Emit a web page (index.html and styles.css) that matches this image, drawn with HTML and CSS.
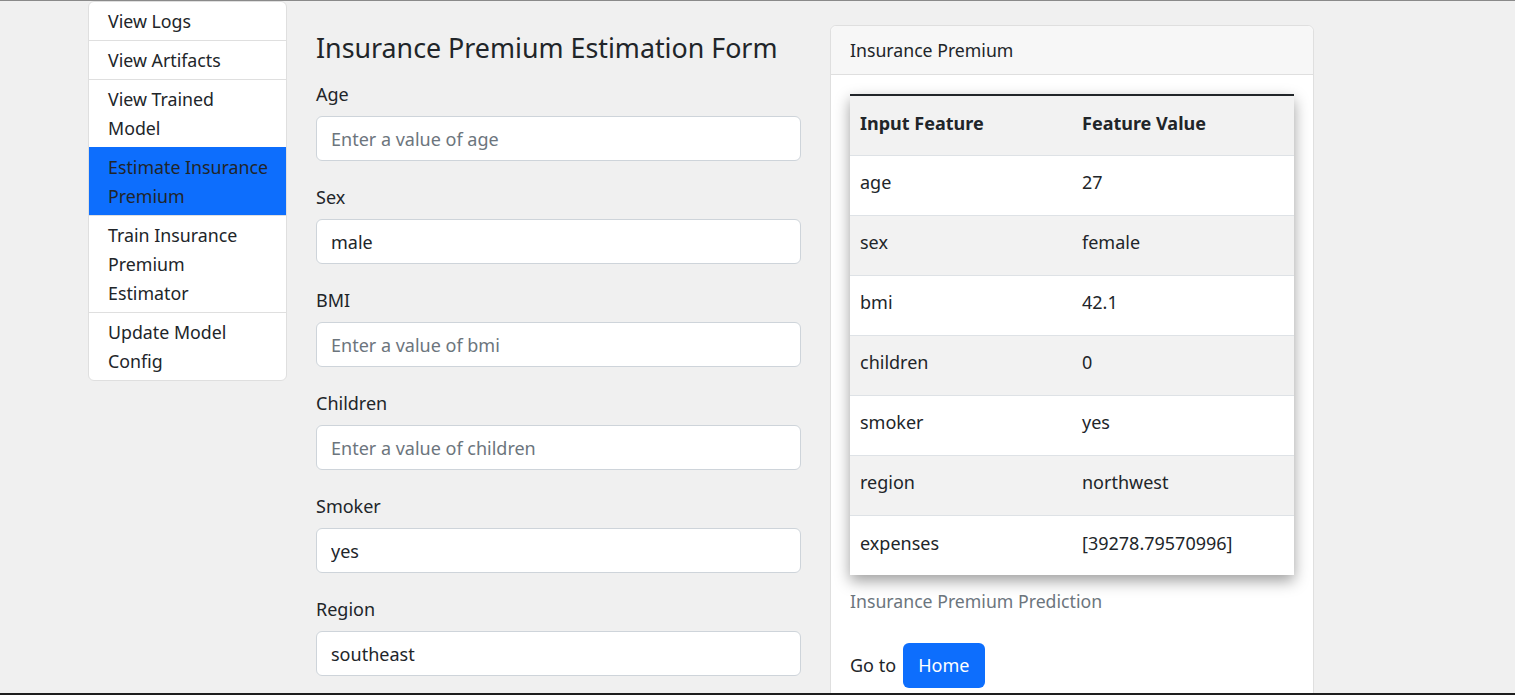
FILE: index.html
```html
<!DOCTYPE html>
<html lang="en">
<head>
<meta charset="utf-8">
<title>Insurance Premium Estimation</title>
<link rel="stylesheet" href="styles.css">
</head>
<body>
<div class="frame">
  <div class="page">
    <nav class="sidebar">
      <a class="item" href="#">View Logs</a>
      <a class="item" href="#">View Artifacts</a>
      <a class="item" href="#">View Trained Model</a>
      <a class="item active" href="#">Estimate Insurance Premium</a>
      <a class="item" href="#">Train Insurance Premium Estimator</a>
      <a class="item" href="#">Update Model Config</a>
    </nav>

    <form class="form">
      <h3 class="title">Insurance Premium Estimation Form</h3>
      <div class="group">
        <label class="label">Age</label>
        <input class="input" type="text" placeholder="Enter a value of age">
      </div>
      <div class="group">
        <label class="label">Sex</label>
        <input class="input" type="text" value="male">
      </div>
      <div class="group">
        <label class="label">BMI</label>
        <input class="input" type="text" placeholder="Enter a value of bmi">
      </div>
      <div class="group">
        <label class="label">Children</label>
        <input class="input" type="text" placeholder="Enter a value of children">
      </div>
      <div class="group">
        <label class="label">Smoker</label>
        <input class="input" type="text" value="yes">
      </div>
      <div class="group">
        <label class="label">Region</label>
        <input class="input" type="text" value="southeast">
      </div>
    </form>

    <section class="card">
      <div class="card-header">Insurance Premium</div>
      <div class="card-body">
        <table class="table">
          <tr><th class="c1">Input Feature</th><th>Feature Value</th></tr>
          <tr><td>age</td><td>27</td></tr>
          <tr><td>sex</td><td>female</td></tr>
          <tr><td>bmi</td><td>42.1</td></tr>
          <tr><td>children</td><td>0</td></tr>
          <tr><td>smoker</td><td>yes</td></tr>
          <tr><td>region</td><td>northwest</td></tr>
          <tr><td>expenses</td><td>[39278.79570996]</td></tr>
        </table>
        <p class="muted">Insurance Premium Prediction</p>
        <p class="goto">Go to <a class="btn" href="#">Home</a></p>
      </div>
    </section>
  </div>
</div>
</body>
</html>
```

FILE: styles.css
```css
html, body {
  margin: 0;
  padding: 0;
  background: #f0f0f0;
}

body {
  font-family: "Noto Sans", "Open Sans", sans-serif;
  color: #212529;
  font-size: 18px;
}

.frame {
  height: 695px;
  box-sizing: border-box;
  border-top: 1px solid #8a8a8a;
  border-bottom: 2px solid #1e1e1e;
  overflow: hidden;
}

.page {
  display: flex;
  align-items: flex-start;
  gap: 29px;
  padding-left: 88px;
}

/* Sidebar list */
.sidebar {
  width: 199px;
  flex: none;
  display: flex;
  flex-direction: column;
  background: #fff;
  border: 1px solid #dfdfdf;
  border-radius: 6px;
  overflow: hidden;
  box-sizing: border-box;
}

.item {
  display: block;
  padding: 4.5px 17px 4.5px 19px;
  line-height: 29px;
  font-size: 17.8px;
  color: #212529;
  text-decoration: none;
  border-top: 1px solid #dfdfdf;
}

.item:first-child {
  border-top: none;
}

.item.active {
  background: #0d6efd;
  border-top-color: #0d6efd;
}

/* Form */
.form {
  width: 485px;
  flex: none;
  padding-top: 30px;
}

.title {
  margin: 0 0 14.6px;
  font-size: 26.8px;
  font-weight: 400;
  line-height: 34.5px;
  color: #212529;
}

.group {
  margin-bottom: 21.6px;
}

.label {
  display: block;
  margin-bottom: 7.6px;
  line-height: 28.8px;
  font-size: 18px;
}

.input {
  display: block;
  width: 100%;
  box-sizing: border-box;
  height: 45px;
  padding: 7px 14px;
  font-family: inherit;
  font-size: 18px;
  line-height: 28.8px;
  color: #212529;
  background: #fff;
  border: 1px solid #ced4da;
  border-radius: 6px;
  outline: none;
}

.input::placeholder {
  color: #6c757d;
}

/* Card */
.card {
  width: 484px;
  flex: none;
  margin-top: 24px;
  background: #fff;
  border: 1px solid #dfdfdf;
  border-radius: 6px;
  box-sizing: border-box;
}

.card-header {
  height: 49px;
  box-sizing: border-box;
  padding: 0 19px;
  display: flex;
  align-items: center;
  font-size: 17.7px;
  background: #f7f7f7;
  border-bottom: 1px solid #dfdfdf;
  border-radius: 6px 6px 0 0;
}

.card-body {
  padding: 19.2px 19px;
}

.table {
  width: 100%;
  border-collapse: collapse;
  border-top: 2px solid #212529;
  box-shadow: 0 6px 14px rgba(0, 0, 0, 0.38);
  font-size: 18px;
}

.table th,
.table td {
  height: 60px;
  box-sizing: border-box;
  padding: 0 10px 5px;
  text-align: left;
  vertical-align: middle;
  line-height: 28.8px;
}

.table th {
  font-weight: 700;
}

.table .c1 {
  width: 222px;
}

.table tr {
  border-top: 1px solid #dee2e6;
}

.table tr:first-child {
  border-top: none;
}

.table tr:nth-child(odd) {
  background: #f2f2f2;
}

.table tr:nth-child(even) {
  background: #fff;
}

.muted {
  margin: 14px 0 0;
  font-size: 17.7px;
  line-height: 24px;
  color: #6c757d;
}

.goto {
  margin: 30px 0 0;
  font-size: 18px;
  line-height: 45px;
}

.btn {
  display: inline-block;
  height: 45px;
  box-sizing: border-box;
  margin-left: 2px;
  padding: 0 15.5px;
  line-height: 45px;
  font-size: 18px;
  color: #fff;
  background: #0d6efd;
  border-radius: 6px;
  text-decoration: none;
  vertical-align: top;
}
```
